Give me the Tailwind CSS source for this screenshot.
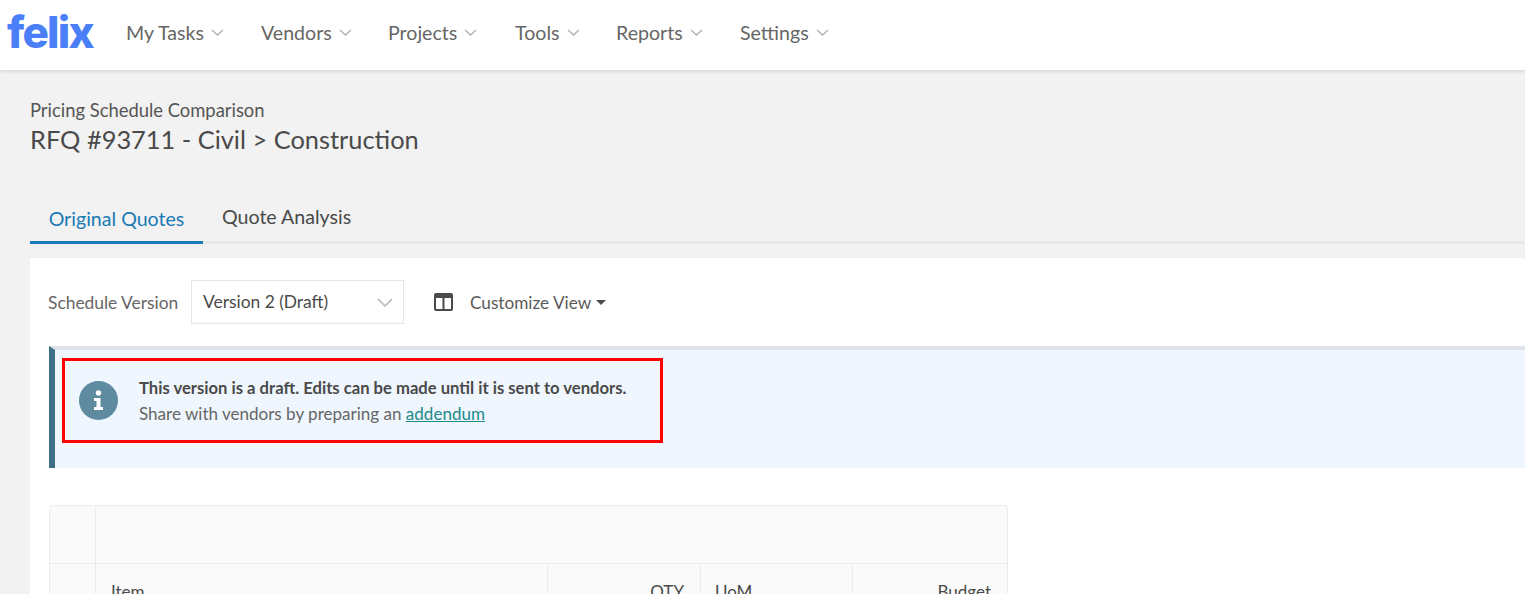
<!DOCTYPE html>
<html lang="en">
<head>
  <meta charset="UTF-8">
  <title>Pricing Schedule Comparison</title>
  <script src="https://cdn.jsdelivr.net/npm/@tailwindcss/browser@4"></script>
</head>
<body class="bg-[#f2f2f2] h-[594px] overflow-hidden font-['Lato','Open_Sans',sans-serif] text-[#4a4a4a]">
  <!-- Top nav -->
  <nav class="h-[70px] bg-white shadow-[0_1px_4px_rgba(0,0,0,0.15)] flex items-center relative">
    <span class="w-[126px] pl-[7px] -mt-[6px] text-[44px] leading-none font-extrabold tracking-[-1.8px] text-[#4a7ff7] font-['Inter',sans-serif]">felix</span>
    <div class="flex items-center text-[19.6px] text-[#666] mb-[4px]">
      <a class="flex items-center gap-[7px] w-[135px]">My Tasks <svg class="w-[13px] h-[7px]" viewBox="0 0 13 7" fill="none" stroke="#b0b0b0" stroke-width="1.3"><path d="M1 1l5.500 5 5.500-5"/></svg></a>
      <a class="flex items-center gap-[7px] w-[127px]">Vendors <svg class="w-[13px] h-[7px]" viewBox="0 0 13 7" fill="none" stroke="#b0b0b0" stroke-width="1.3"><path d="M1 1l5.500 5 5.500-5"/></svg></a>
      <a class="flex items-center gap-[7px] w-[127px]">Projects <svg class="w-[13px] h-[7px]" viewBox="0 0 13 7" fill="none" stroke="#b0b0b0" stroke-width="1.3"><path d="M1 1l5.500 5 5.500-5"/></svg></a>
      <a class="flex items-center gap-[7px] w-[101px]">Tools <svg class="w-[13px] h-[7px]" viewBox="0 0 13 7" fill="none" stroke="#b0b0b0" stroke-width="1.3"><path d="M1 1l5.500 5 5.500-5"/></svg></a>
      <a class="flex items-center gap-[7px] w-[124px]">Reports <svg class="w-[13px] h-[7px]" viewBox="0 0 13 7" fill="none" stroke="#b0b0b0" stroke-width="1.3"><path d="M1 1l5.500 5 5.500-5"/></svg></a>
      <a class="flex items-center gap-[7px]">Settings <svg class="w-[13px] h-[7px]" viewBox="0 0 13 7" fill="none" stroke="#b0b0b0" stroke-width="1.3"><path d="M1 1l5.500 5 5.500-5"/></svg></a>
    </div>
  </nav>

  <main class="pl-[30px]">
    <header class="pt-[28px] h-[128px]">
      <p class="text-[18.4px] leading-[24px] text-[#555]">Pricing Schedule Comparison</p>
      <h1 class="text-[25.4px] leading-[34px]">RFQ #93711 - Civil &gt; Construction</h1>
    </header>

    <!-- Tabs -->
    <div class="h-[46px] flex border-b-[3px] border-[#e8e8e8]">
      <div class="w-[173px] h-[46px] border-b-[3px] border-[#1b7ab5] text-[#1b7ab5] text-[19.6px] text-center pt-[8px] leading-[26px]">Original Quotes</div>
      <div class="pl-[19px] text-[19.6px] leading-[26px] pt-[6px]">Quote Analysis</div>
    </div>

    <section class="mt-[13px] bg-white h-[400px] pl-[19px] pt-[22px] border-t border-[#ececec]">
      <div class="flex items-center h-[44px]">
        <span class="-ml-[1px] pt-[2px] text-[17.4px] text-[#666] w-[143px]">Schedule Version</span>
        <div class="w-[213px] h-[44px] pt-[1px] border border-[#e6e6e6] flex items-center justify-between pl-[11px] pr-[10px] text-[17.4px]">
          Version 2 (Draft)
          <svg class="w-[16px] h-[10px]" viewBox="0 0 16 10" fill="none" stroke="#c4c4c4" stroke-width="1.8"><path d="M1 1l7 7 7-7"/></svg>
        </div>
        <svg class="ml-[30px] w-[19px] h-[18px]" viewBox="0 0 19 18"><path fill="#4a4a4a" fill-rule="evenodd" d="M2 0h15a2 2 0 012 2v14a2 2 0 01-2 2H2a2 2 0 01-2-2V2a2 2 0 012-2zm0 5v11h6.500V5zm8.500 0v11H17V5z"/></svg>
        <span class="ml-[17px] pt-[1px] text-[17.2px] text-[#5a5a5a]">Customize View</span>
        <span class="ml-[5px] mt-[1px] w-0 h-0 border-x-[5px] border-x-transparent border-t-[5px] border-t-[#4a4a4a]"></span>
      </div>

      <!-- Draft notice -->
      <div class="relative mt-[22px] h-[122px] bg-[#eff6fd] border-t-[4px] border-l-[6px] border-t-[#dde3e8] border-l-[#3d6f87] flex">
        <div class="ml-[24px] mt-[31px] w-[39px] h-[39px] rounded-full bg-[#5f8ba1] flex items-center justify-center">
          <svg class="w-[11px] h-[21px]" viewBox="0 0 11 21" fill="#fff"><circle cx="5.500" cy="3" r="2.700"/><path d="M1 8h6.500v9H10v3H1v-3h2.500v-6H1z"/></svg>
        </div>
        <div class="ml-[21px] mt-[26px]">
          <p class="text-[16.65px] leading-[25px] font-bold">This version is a draft. Edits can be made until it is sent to vendors.</p>
          <p class="text-[17.05px] leading-[25px] text-[#666]">Share with vendors by preparing an <a class="text-[#1d8a8a] underline">addendum</a></p>
        </div>
        <div class="absolute left-[7px] top-[8px] w-[601px] h-[85px] border-[3px] border-[#ff0000]"></div>
      </div>

      <!-- Table -->
      <div class="mt-[37px] w-[959px] bg-[#fafafa] border border-[#ececec] rounded-t-[4px] text-[17px]">
        <div class="h-[58px] flex border-b border-[#ececec]">
          <div class="w-[46px] border-r border-[#ececec]"></div>
        </div>
        <div class="h-[60px] flex">
          <div class="w-[46px] border-r border-[#ececec]"></div>
          <div class="w-[452px] border-r border-[#ececec] pl-[15px] pt-[15px]">Item</div>
          <div class="w-[153px] border-r border-[#ececec] pr-[16px] pt-[15px] text-right">QTY</div>
          <div class="w-[152px] border-r border-[#ececec] pl-[14px] pt-[15px]">UoM</div>
          <div class="flex-1 pr-[16px] pt-[15px] text-right">Budget</div>
        </div>
      </div>
    </section>
  </main>
</body>
</html>
